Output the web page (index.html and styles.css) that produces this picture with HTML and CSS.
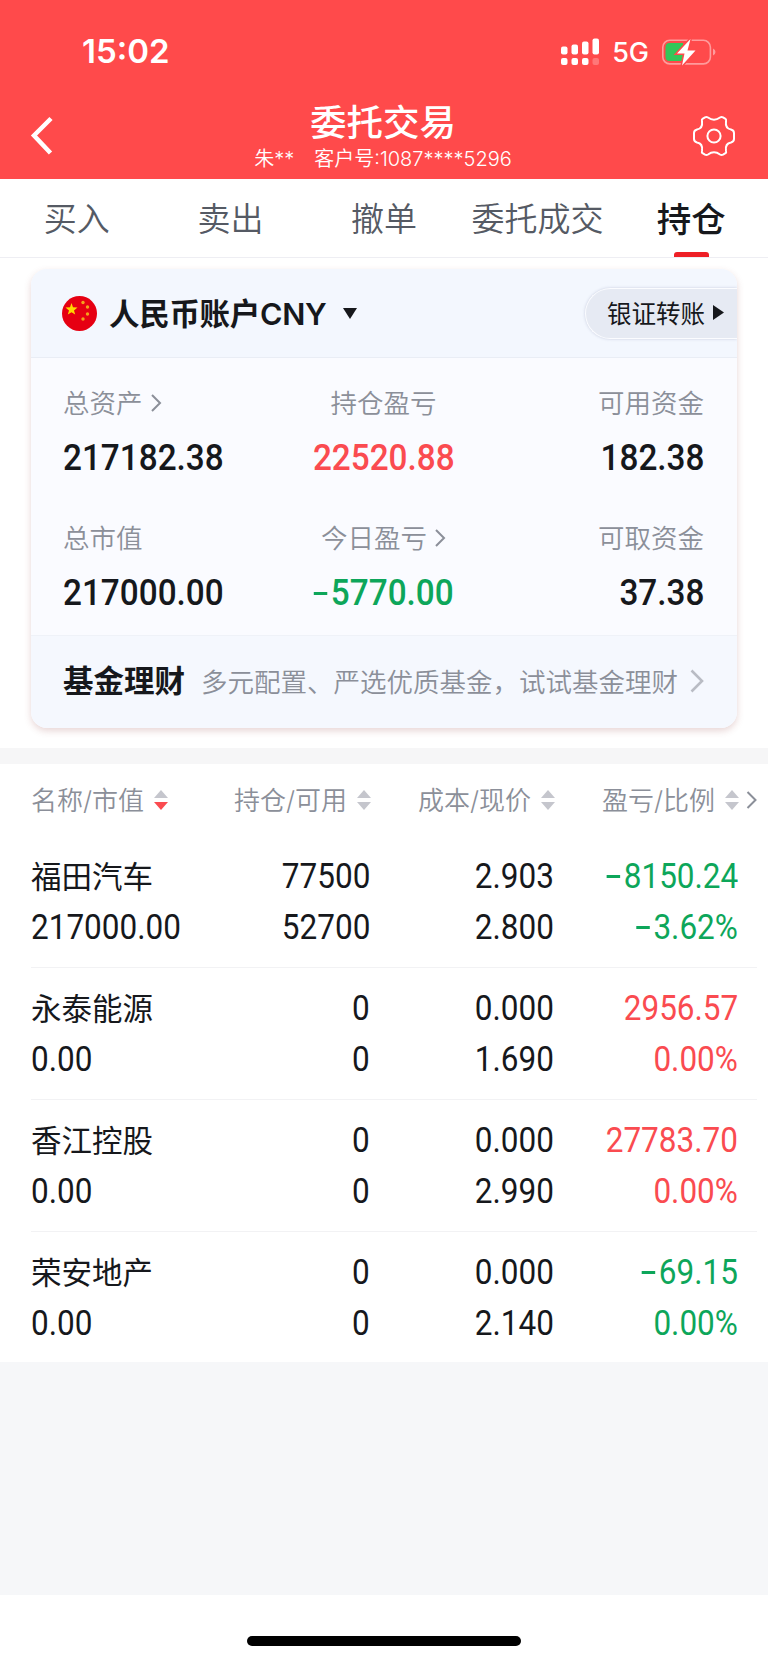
FILE: index.html
```html
<!DOCTYPE html>
<html lang="zh-CN">
<head>
    <meta charset="UTF-8">
    <title>委托交易</title>
    <link rel="stylesheet" href="styles.css">
</head>
<body>
    <!-- Header -->
    <div class="header">
        <div class="status-bar">
            <span class="time">15:02</span>
            <div class="status-icons">
                <svg class="signal" width="39" height="28" viewBox="0 0 39 28" fill="#fff">
                    <rect x="0" y="8.500" width="6.500" height="8" rx="2"/>
                    <rect x="10.500" y="6.500" width="6.500" height="10" rx="2"/>
                    <rect x="21" y="3.500" width="6.500" height="13" rx="2"/>
                    <rect x="31.500" y="0.500" width="6.500" height="16" rx="2"/>
                    <rect x="0" y="20" width="6.500" height="7" rx="2"/>
                    <rect x="10.500" y="20" width="6.500" height="7" rx="2"/>
                    <rect x="21" y="20" width="6.500" height="7" rx="2"/>
                    <rect x="31.500" y="20" width="6.500" height="7" rx="2" opacity="0.25"/>
                </svg>
                <span class="network">5G</span>
                <svg class="battery" width="54" height="28" viewBox="0 0 54 28">
                    <rect x="0.800" y="2.300" width="47.600" height="23.600" rx="7" fill="none" stroke="#fff" stroke-opacity="0.45" stroke-width="1.600"/>
                    <path d="M51 10.500v7q2.500-1 2.500-3.500t-2.500-3.500z" fill="#fff" fill-opacity="0.45"/>
                    <path d="M7.500 5H21v18H7.500Q3.500 23 3.500 19V9q0-4 4-4z" fill="#34c759"/>
                    <path d="M28.500 1L15 15.500h7.500L20 27.500L33.500 12.500h-8z" fill="#fff" stroke="#ff4a4b" stroke-width="3" paint-order="stroke"/>
                </svg>
            </div>
        </div>
        <div class="nav-bar">
            <svg class="back" width="24" height="40" viewBox="0 0 24 40" fill="none" stroke="#fff" stroke-width="4.500">
                <path d="M21 2.500L4 19.500L20.500 37"/>
            </svg>
            <div class="nav-title">
                <h1>委托交易</h1>
                <p><span>朱**</span><span>客户号:1087****5296</span></p>
            </div>
            <svg class="gear" width="42" height="42" viewBox="0 0 42 42" fill="none" stroke="#fff" stroke-width="2" stroke-linejoin="round">
                <path d="M12 2.300Q13.500 1.500 15 2.500Q21 7 27 2.500Q28.500 1.500 30 2.300L32.500 3.800Q33.500 4.500 33 6.500Q32 13.500 38 14.500Q41 15.300 41 18V24Q41 26.700 38 27.500Q32 28.500 33 35.500Q33.500 37.500 32.500 38.200L30 39.700Q28.500 40.500 27 39.500Q21 35 15 39.500Q13.500 40.500 12 39.700L9.500 38.200Q8.500 37.500 9 35.500Q10 28.500 4 27.500Q1 26.700 1 24V18Q1 15.300 4 14.500Q10 13.500 9 6.500Q8.500 4.500 9.500 3.800Z"/>
                <circle cx="21" cy="21" r="6.600"/>
            </svg>
        </div>
    </div>

    <!-- Tabs -->
    <div class="tabs">
        <div class="tab">买入</div>
        <div class="tab">卖出</div>
        <div class="tab">撤单</div>
        <div class="tab">委托成交</div>
        <div class="tab active">持仓</div>
    </div>

    <!-- Account card -->
    <div class="account">
        <div class="card">
            <div class="card-head">
                <svg class="flag" width="35" height="35" viewBox="0 0 35 35">
                    <circle cx="17.500" cy="17.500" r="17.500" fill="#e60012"/>
                    <path d="M9.500 7L11 11.300L15.500 11.600L12 14.400L13.200 18.600L9.500 16.200L5.800 18.600L7 14.400L3.500 11.600L8 11.300Z" fill="#ffd800"/>
                    <g fill="#f5a11c">
                        <circle cx="21" cy="6.500" r="1.700"/>
                        <circle cx="25.500" cy="11" r="1.700"/>
                        <circle cx="25.500" cy="18" r="1.700"/>
                        <circle cx="21" cy="23" r="1.700"/>
                    </g>
                </svg>
                <span class="account-name">人民币账户CNY</span>
                <svg class="caret" width="14" height="11" viewBox="0 0 14 11"><path d="M0 0h14L7 11z" fill="#16181c"/></svg>
                <div class="transfer">银证转账
                    <svg width="11" height="15" viewBox="0 0 11 15"><path d="M0 0v15l11-7.500z" fill="#16181c"/></svg>
                </div>
            </div>
            <div class="assets">
                <div class="asset">
                    <div class="label">总资产<svg class="more" width="12" height="20" viewBox="0 0 12 20"><path d="M2 2l8 8-8 8"/></svg></div>
                    <div class="value">217182.38</div>
                </div>
                <div class="asset center">
                    <div class="label">持仓盈亏</div>
                    <div class="value up">22520.88</div>
                </div>
                <div class="asset right">
                    <div class="label">可用资金</div>
                    <div class="value">182.38</div>
                </div>
                <div class="asset">
                    <div class="label">总市值</div>
                    <div class="value">217000.00</div>
                </div>
                <div class="asset center">
                    <div class="label">今日盈亏<svg class="more" width="12" height="20" viewBox="0 0 12 20"><path d="M2 2l8 8-8 8"/></svg></div>
                    <div class="value down"><i class="minus"></i>5770.00</div>
                </div>
                <div class="asset right">
                    <div class="label">可取资金</div>
                    <div class="value">37.38</div>
                </div>
            </div>
            <div class="fund">
                <b>基金理财</b>
                <span>多元配置、严选优质基金，试试基金理财</span>
                <svg width="14" height="24" viewBox="0 0 14 24" fill="none" stroke="#b9bcc4" stroke-width="2.600"><path d="M1.500 1.500L12 12L1.500 22.500"/></svg>
            </div>
        </div>
    </div>

    <!-- Positions -->
    <div class="positions">
        <div class="row head">
            <div class="col">名称/市值<i class="sort desc"></i></div>
            <div class="col">持仓/可用<i class="sort"></i></div>
            <div class="col">成本/现价<i class="sort"></i></div>
            <div class="col">盈亏/比例<i class="sort"></i></div>
            <svg class="more" width="11" height="20" viewBox="0 0 11 20"><path d="M1.500 2l8 8-8 8"/></svg>
        </div>
        <div class="row">
            <div class="col"><span class="name">福田汽车</span><span class="num">217000.00</span></div>
            <div class="col"><span class="num">77500</span><span class="num">52700</span></div>
            <div class="col"><span class="num">2.903</span><span class="num">2.800</span></div>
            <div class="col down"><span class="num"><i class="minus"></i>8150.24</span><span class="num"><i class="minus"></i>3.62%</span></div>
        </div>
        <div class="row">
            <div class="col"><span class="name">永泰能源</span><span class="num">0.00</span></div>
            <div class="col"><span class="num">0</span><span class="num">0</span></div>
            <div class="col"><span class="num">0.000</span><span class="num">1.690</span></div>
            <div class="col up"><span class="num">2956.57</span><span class="num">0.00%</span></div>
        </div>
        <div class="row">
            <div class="col"><span class="name">香江控股</span><span class="num">0.00</span></div>
            <div class="col"><span class="num">0</span><span class="num">0</span></div>
            <div class="col"><span class="num">0.000</span><span class="num">2.990</span></div>
            <div class="col up"><span class="num">27783.70</span><span class="num">0.00%</span></div>
        </div>
        <div class="row">
            <div class="col"><span class="name">荣安地产</span><span class="num">0.00</span></div>
            <div class="col"><span class="num">0</span><span class="num">0</span></div>
            <div class="col"><span class="num">0.000</span><span class="num">2.140</span></div>
            <div class="col down"><span class="num"><i class="minus"></i>69.15</span><span class="num">0.00%</span></div>
        </div>
    </div>

    <div class="bottom"><div class="home-bar"></div></div>
</body>
</html>
```
FILE: styles.css
```css
* { box-sizing: border-box; }
body {
    margin: 0;
    min-height: 1663px;
    display: flex;
    flex-direction: column;
    background: #f6f7f9;
    color: #16181c;
    font-family: Inter, "Noto Sans CJK SC", sans-serif;
}
h1, p { margin: 0; font-weight: normal; }
svg { display: block; flex: none; }

/* header */
.header { height: 179px; background: #ff4a4b; color: #fff; }
.status-bar {
    height: 98px;
    padding: 5px 52px 0 82px;
    display: flex;
    align-items: center;
    justify-content: space-between;
}
.time { font-size: 33px; font-weight: 600; line-height: 40px; margin-top: -2px; }
.status-icons { display: flex; align-items: center; }
.network { margin: 0 13px 0 12px; font-size: 27px; font-weight: 450; line-height: 28px; padding-top: 2px; }
.nav-bar {
    height: 81px;
    padding: 0 33px 0 30px;
    display: flex;
    justify-content: space-between;
}
.back { margin-top: 18px; }
.gear { margin-top: 17px; }
.nav-title { text-align: center; padding: 2px 0 0 19px; }
.nav-title h1 { font-size: 36.5px; font-weight: 500; line-height: 46px; }
.nav-title p {
    display: flex;
    gap: 20px;
    font-size: 20px;
    font-weight: 350;
    line-height: 27px;
}

/* tabs */
.tabs {
    height: 79px;
    display: flex;
    background: #fff;
    border-bottom: 1px solid #eeeef3;
}
.tab {
    flex: 1;
    display: flex;
    flex-direction: column;
    align-items: center;
    font-size: 33px;
    font-weight: 350;
    line-height: 73px;
    padding-top: 4px;
    color: #555a64;
    height: 78px;
    white-space: nowrap;
}
.tab.active { color: #16181c; font-weight: 500; font-size: 34.5px; }
.tab.active::after {
    content: "";
    width: 35px;
    height: 5px;
    margin-top: -4px;
    border-radius: 3px 3px 0 0;
    background: #ee1f26;
    flex: none;
}

/* account card */
.account {
    background: #fff;
    padding: 11px 31px 20px;
    border-bottom: 16px solid #f6f6f7;
}
.card {
    height: 459px;
    border-radius: 16px;
    background: #fafbff;
    box-shadow: 0 3px 7px rgba(150, 70, 70, 0.22);
    overflow: hidden;
}
.card-head {
    height: 89px;
    padding-left: 31px;
    display: flex;
    align-items: center;
    background: #f3f7fe;
    border-bottom: 1px solid #e9edf5;
}
.account-name {
    margin: -2px 16px 0 12px;
    font-size: 30.5px;
    font-weight: 600;
    letter-spacing: -0.3px;
    white-space: nowrap;
}
.transfer {
    margin-left: auto;
    height: 51px;
    padding: 0 13px 1px 21px;
    display: flex;
    align-items: center;
    gap: 8px;
    font-size: 24.5px;
    border-radius: 26px 0 0 26px;
    background: #e6eaf3;
    border: 1px solid #fbfcff;
    border-right: 0;
    box-shadow: 0 0 3px rgba(100, 110, 150, 0.3);
}
.assets {
    height: 278px;
    padding: 24px 33px 0 32px;
    display: grid;
    grid-template-columns: 1fr 1fr 1fr;
    grid-template-rows: 135px 135px;
    border-bottom: 1px solid #eff2f8;
}
.asset { display: flex; flex-direction: column; align-items: flex-start; }
.asset.center { align-items: center; }
.asset.right { align-items: flex-end; }
.label {
    display: flex;
    align-items: center;
    gap: 7px;
    font-size: 26.5px;
    font-weight: 350;
    line-height: 42px;
    color: #8b8f99;
}
.value, .num {
    font-family: Roboto, sans-serif;
    transform: scaleX(0.9);
    transform-origin: left;
    white-space: nowrap;
}
.value { margin-top: 13px; font-size: 37px; font-weight: 500; line-height: 42px; }
.center .value { transform-origin: center; }
.right .value { transform-origin: right; }
.more { fill: none; stroke: #8b8f99; stroke-width: 2; }
.up { color: #fa4b50; }
.down { color: #0da65a; }
.minus {
    display: inline-block;
    width: 15px;
    height: 3px;
    margin-right: 4px;
    vertical-align: 10px;
    background: currentColor;
}
.fund {
    height: 92px;
    padding: 0 33px 4px 32px;
    display: flex;
    align-items: center;
    background: #f5f8fe;
    white-space: nowrap;
}
.fund b { font-size: 30.5px; font-weight: 700; margin-top: -2px; }
.fund span { margin-left: 16px; font-size: 26.5px; font-weight: 350; color: #8b8f99; }
.fund svg { margin: 2px 0 0 auto; }

/* positions */
.positions { background: #fff; height: 598px; }
.row {
    height: 132px;
    margin: 0 11px 0 31px;
    padding-top: 15px;
    display: grid;
    grid-template-columns: 204px 135px 184px 184px 1fr;
    border-bottom: 1px solid #f2f2f4;
}
.row:last-child { border-bottom: 0; }
.row.head { height: 72px; padding: 0; border: 0; align-items: center; }
.col { display: flex; flex-direction: column; align-items: flex-end; }
.col:first-child { align-items: flex-start; }
.head .col {
    height: 42px;
    padding-bottom: 3px;
    flex-direction: row;
    align-items: center;
    justify-content: flex-end;
    font-size: 26px;
    font-weight: 350;
    color: #8b8f99;
    white-space: nowrap;
}
.head .col:first-child { justify-content: flex-start; }
.head .more { margin-left: 8px; }
.sort { margin: 3px 0 0 10px; }
.col + .col .sort { margin-right: -1px; }
.sort::before, .sort::after {
    content: "";
    display: block;
    border: 7px solid transparent;
    border-top-width: 0;
    border-bottom: 8px solid #c5c6cd;
}
.sort::after {
    margin-top: 4px;
    border-bottom-width: 0;
    border-top: 8px solid #c5c6cd;
}
.sort.desc::after { border-top-color: #fa4b50; }
.name { font-size: 30.5px; line-height: 51px; }
.num { font-size: 35px; line-height: 51px; transform-origin: right; }
.col:first-child .num { transform-origin: left; }

/* home indicator */
.bottom { margin-top: auto; height: 68px; padding-top: 41px; background: #fff; }
.home-bar { width: 274px; height: 10px; margin: 0 auto; border-radius: 5px; background: #000; }
```
